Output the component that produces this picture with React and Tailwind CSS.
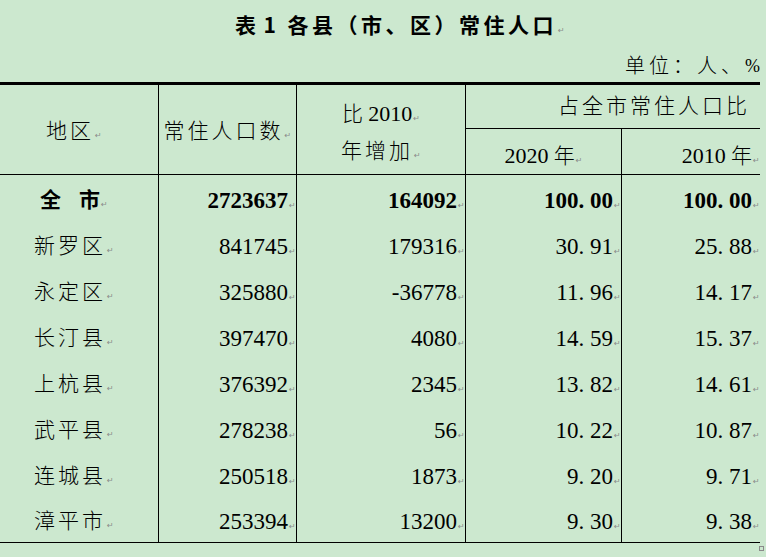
import React from "react";

const rows = [
  { name: "全市", pop: "2723637", inc: "164092", p20: "100.00", p10: "100.00", total: true },
  { name: "新罗区", pop: "841745", inc: "179316", p20: "30.91", p10: "25.88" },
  { name: "永定区", pop: "325880", inc: "-36778", p20: "11.96", p10: "14.17" },
  { name: "长汀县", pop: "397470", inc: "4080", p20: "14.59", p10: "15.37" },
  { name: "上杭县", pop: "376392", inc: "2345", p20: "13.82", p10: "14.61" },
  { name: "武平县", pop: "278238", inc: "56", p20: "10.22", p10: "10.87" },
  { name: "连城县", pop: "250518", inc: "1873", p20: "9.20", p10: "9.71" },
  { name: "漳平市", pop: "253394", inc: "13200", p20: "9.30", p10: "9.38" },
];

// Word paragraph mark, sits on the text baseline
const Mark = () => (
  <span className="inline-block w-[7px] ml-[1px] align-baseline font-['DejaVu_Sans',sans-serif] text-[8px] font-normal tracking-normal leading-none text-[#8a8a8a]">
    ↵
  </span>
);

// SimSun draws the period half an em wide
const Num = ({ value }) => {
  const [whole, frac] = value.split(".");
  return (
    <>
      {whole}
      {frac !== undefined && (
        <>
          <span className="inline-block w-[0.5em]">.</span>
          {frac}
        </>
      )}
    </>
  );
};

const cols = "grid grid-cols-[159px_138px_169px_156px_138px] w-[760px]";
const serif = "font-['Liberation_Serif','Noto_Sans_CJK_SC',serif]";

const DataCell = ({ value, bold, last }) => (
  <div className={`flex items-center justify-end pt-[4px] ${last ? "" : "border-r border-black"}`}>
    <span className={`whitespace-nowrap leading-none text-[23px] ${bold ? "font-bold" : ""}`}>
      <Num value={value} />
      <Mark />
    </span>
  </div>
);

export default function App() {
  return (
    <div className={`w-[766px] h-[557px] overflow-hidden bg-[#cce8cf] text-black ${serif}`}>
      <div className="h-[48px] flex items-center justify-center pl-[34px] font-['Noto_Sans_CJK_SC',sans-serif] text-[21px] font-bold tracking-[3.5px] leading-none">
        <span className="whitespace-nowrap">
          表<span className="ml-[4px]">1</span> 各县（市、区）常住人口
          <Mark />
        </span>
      </div>

      <div className="h-[34px] flex items-center justify-end pr-[6px] pt-[2px] text-[20px] leading-none whitespace-nowrap">
        <span className="font-light tracking-[4px]">单位：人、</span>
        <span className="text-[18px]">%</span>
      </div>

      <div className={`${cols} grid-rows-[44px_45px] border-t-[3px] border-b border-black`}>
        <div className="row-span-2 flex items-center justify-center pr-[10px] pt-[3px] border-r border-black text-[21px] tracking-[3px] font-light leading-none">
          <span>
            地区
            <Mark />
          </span>
        </div>
        <div className="row-span-2 flex items-center justify-center pt-[3px] border-r border-black text-[21px] tracking-[3px] font-light leading-none">
          <span>
            常住人口数
            <Mark />
          </span>
        </div>
        <div className="row-span-2 flex flex-col items-center justify-center gap-[16px] pt-[6px] border-r border-black text-[21px] font-light leading-none">
          <span className="whitespace-nowrap">
            比 <span className="text-[22px]">2010</span>
            <Mark />
          </span>
          <span className="whitespace-nowrap">
            <span className="tracking-[3px]">年增加</span>
            <Mark />
          </span>
        </div>
        <div className="col-span-2 flex items-center justify-end pr-[10px] border-b border-black text-[21px] tracking-[3px] font-light leading-none">
          <span>占全市常住人口比</span>
        </div>
        <div className="flex items-center justify-center pt-[8px] border-r border-black text-[21px] font-light leading-none">
          <span className="whitespace-nowrap">
            <span className="text-[22px]">2020</span> 年
            <Mark />
          </span>
        </div>
        <div className="flex items-center justify-end pt-[8px] text-[21px] font-light leading-none">
          <span className="whitespace-nowrap">
            <span className="text-[22px]">2010</span> 年
            <Mark />
          </span>
        </div>
      </div>

      <div className={`${cols} grid-rows-[repeat(7,46px)_45px] border-b border-black`}>
        {rows.map((r) => (
          <React.Fragment key={r.name}>
            <div className="flex items-center justify-center pr-[10px] pt-[4px] border-r border-black text-[21px] leading-none">
              {r.total ? (
                <span className="font-bold whitespace-nowrap">
                  全<span className="inline-block w-[18px]" />市
                  <Mark />
                </span>
              ) : (
                <span className="tracking-[3px] font-light whitespace-nowrap">
                  {r.name}
                  <Mark />
                </span>
              )}
            </div>
            <DataCell value={r.pop} bold={r.total} />
            <DataCell value={r.inc} bold={r.total} />
            <DataCell value={r.p20} bold={r.total} />
            <DataCell value={r.p10} bold={r.total} last />
          </React.Fragment>
        ))}
      </div>

      <div className="ml-[759px] mt-[3px] w-[5px] h-[5px] border border-[#8a8a8a]" />
    </div>
  );
}
